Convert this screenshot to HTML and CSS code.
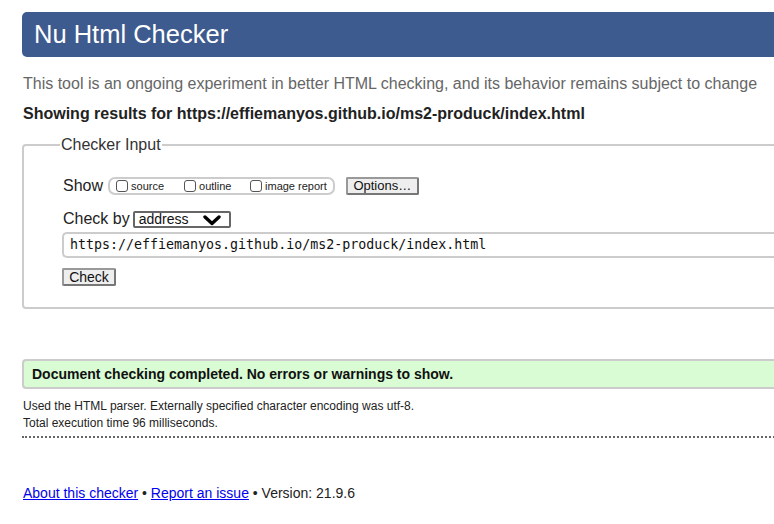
FILE: index.html
```html
<!DOCTYPE html>
<html lang="en">
<head>
<meta charset="utf-8">
<title>Nu Html Checker</title>
<link rel="stylesheet" href="styles.css">
</head>
<body>
<div class="page">
  <h1 class="banner">Nu Html Checker</h1>
  <p class="intro">This tool is an ongoing experiment in better HTML checking, and its behavior remains subject to change</p>
  <p class="showing">Showing results for https://effiemanyos.github.io/ms2-produck/index.html</p>

  <fieldset class="checker">
    <legend class="legend">Checker Input</legend>
    <div class="row show-row">
      <span class="label">Show</span>
      <div class="show-box">
        <label class="opt opt-source"><span class="cb"></span>source</label>
        <label class="opt opt-outline"><span class="cb"></span>outline</label>
        <label class="opt"><span class="cb"></span>image report</label>
      </div>
      <span class="btn btn-options">Options…</span>
    </div>
    <div class="row by-row">
      <span class="label">Check by</span>
      <span class="select">address
        <svg class="chev" width="18" height="11" viewBox="0 0 18 11"><polyline points="2,2 9,8.5 16,2" fill="none" stroke="#000" stroke-width="3.4" stroke-linecap="round" stroke-linejoin="round"/></svg>
      </span>
    </div>
    <div class="url">https://effiemanyos.github.io/ms2-produck/index.html</div>
    <div class="row"><span class="btn btn-check">Check</span></div>
  </fieldset>

  <div class="success">Document checking completed. No errors or warnings to show.</div>
  <div class="details">
    <p class="detail">Used the HTML parser. Externally specified character encoding was utf-8.</p>
    <p class="detail">Total execution time 96 milliseconds.</p>
  </div>

  <p class="footer"><a href="#">About this checker</a> • <a href="#">Report an issue</a> • Version: 21.9.6</p>
</div>
</body>
</html>
```

FILE: styles.css
```css
html, body {
  margin: 0;
  padding: 0;
  overflow: hidden;
  background: #fff;
}
body {
  font-family: "Liberation Sans", Arial, Helvetica, sans-serif;
  color: #222;
}
.page {
  padding: 12px 0 0 22px;
  width: 820px;
}
.banner {
  margin: 0;
  height: 45px;
  line-height: 45px;
  background: #3d5b8e;
  border-radius: 5px;
  color: #fff;
  font-size: 25.5px;
  font-weight: normal;
  padding-left: 12px;
}
.intro {
  margin: 17px 0 0 1px;
  font-size: 16px;
  line-height: 20px;
  color: #666;
}
.showing {
  margin: 10px 0 0 1px;
  font-size: 16px;
  line-height: 20px;
  font-weight: bold;
  color: #222;
}
.checker {
  margin: 11px 0 0 0;
  border: 2px solid #ccc;
  border-radius: 4px;
  padding: 0 0 21px 39px;
  min-width: 0;
}
.legend {
  font-size: 16px;
  line-height: 20px;
  padding: 0 1px;
  margin-left: -3px;
  color: #333;
}
.row {
  display: flex;
  align-items: center;
}
.label {
  font-size: 16px;
  line-height: 20px;
  color: #222;
}
.show-row {
  margin-top: 21px;
  height: 20px;
}
.show-box {
  display: flex;
  align-items: center;
  margin-left: 5px;
  height: 14px;
  border: 2px solid #ccc;
  border-radius: 7px;
  padding: 0 6px 0 6px;
}
.opt {
  display: flex;
  align-items: center;
  font-size: 11px;
  color: #222;
  gap: 3px;
}
.opt-source {
  width: 68px;
}
.opt-outline {
  width: 66px;
}
.cb {
  width: 10px;
  height: 10px;
  border: 1px solid #555;
  border-radius: 3px;
  background: #fff;
}
.btn {
  display: inline-block;
  background: #eee;
  border: 2px solid #777;
  border-top-color: #999;
  border-left-color: #999;
  border-radius: 2px;
  color: #111;
  box-sizing: border-box;
  text-align: center;
}
.btn-options {
  margin-left: 11px;
  width: 73px;
  height: 18px;
  font-size: 13px;
  line-height: 14px;
}
.by-row {
  margin-top: 13px;
  height: 20px;
}
.select {
  position: relative;
  display: inline-flex;
  align-items: center;
  margin-left: 3px;
  width: 98px;
  height: 17px;
  box-sizing: border-box;
  border: 2px solid #666;
  border-radius: 2px;
  padding-left: 4px;
  font-size: 14px;
  color: #111;
}
.chev {
  position: absolute;
  right: 8px;
  top: 2px;
}
.url {
  margin: 3px 0 0 -1px;
  height: 26px;
  box-sizing: border-box;
  border: 2px solid #ccc;
  border-right: none;
  border-radius: 5px 0 0 5px;
  padding-left: 6px;
  font-family: "DejaVu Sans Mono", Menlo, monospace;
  font-size: 13.3px;
  line-height: 22px;
  color: #111;
}
.btn-check {
  margin: 10px 0 0 -1px;
  width: 54px;
  height: 18px;
  font-size: 14px;
  line-height: 14px;
}
.success {
  margin-top: 50px;
  height: 30px;
  box-sizing: border-box;
  background: #d9fcd4;
  border: 2px solid #ccc;
  border-right: none;
  border-radius: 4px 0 0 4px;
  padding-left: 8px;
  font-size: 14px;
  font-weight: bold;
  line-height: 26px;
  color: #111;
}
.details {
  margin-top: 9px;
  padding-bottom: 4px;
  border-bottom: 2px dotted #666;
}
.detail {
  margin: 0 0 0 1px;
  font-size: 12px;
  line-height: 17px;
  color: #222;
}
.footer {
  margin: 46px 0 0 1px;
  font-size: 14px;
  line-height: 18px;
  color: #222;
}
.footer a {
  color: #00e;
  text-decoration: underline;
}
```
